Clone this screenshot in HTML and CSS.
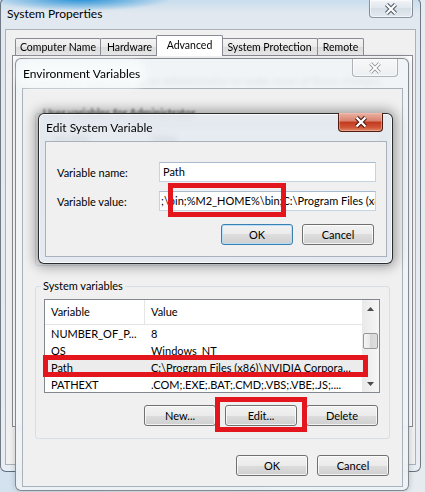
FILE: index.html
```html
<!DOCTYPE html>
<html lang="en">
<head>
    <meta charset="UTF-8">
    <meta name="viewport" content="width=device-width, initial-scale=1.0">
    <title>Environment Variables</title>
    <link rel="stylesheet" href="styles.css">
</head>
<body>
    <div class="desktop">

        <!-- System Properties, inactive, at the back -->
        <div class="window sysprop">
            <div class="titlebar">
                <span class="title">System Properties</span>
                <span class="close close-dim">
                    <svg width="14" height="12" viewBox="0 0 14 12"><path d="M2.5 1.5 L11.5 10.5 M11.5 1.5 L2.5 10.5" stroke="#56616d" stroke-width="4.4"/><path d="M2.5 1.5 L11.5 10.5 M11.5 1.5 L2.5 10.5" stroke="#fff" stroke-width="2.2"/></svg>
                </span>
            </div>
            <div class="client">
                <div class="tabs">
                    <span class="tab tab-cn">Computer Name</span>
                    <span class="tab tab-hw">Hardware</span>
                    <span class="tab tab-adv selected">Advanced</span>
                    <span class="tab tab-sp">System Protection</span>
                    <span class="tab tab-rm">Remote</span>
                </div>
                <div class="tabpage">
                    <p class="note">You must be logged on as an Administrator to make most of these changes.</p>
                </div>
            </div>
        </div>

        <!-- Environment Variables, inactive -->
        <div class="window envvars">
            <div class="titlebar">
                <span class="title glow">Environment Variables</span>
                <span class="close close-dim close-light">
                    <svg width="14" height="12" viewBox="0 0 14 12"><path d="M2.5 1.5 L11.5 10.5 M11.5 1.5 L2.5 10.5" stroke="#8d9196" stroke-width="3.6"/><path d="M2.5 1.5 L11.5 10.5 M11.5 1.5 L2.5 10.5" stroke="#fff" stroke-width="1.8"/></svg>
                </span>
            </div>
            <div class="client">
                <fieldset class="group group-user">
                    <legend>User variables for Administrator</legend>
                    <div class="listview">
                        <div class="lv-main">
                            <div class="lv-row lv-head"><span class="c1">Variable</span><span class="c2">Value</span></div>
                            <div class="lv-row"><span class="c1">TEMP</span><span class="c2">%USERPROFILE%\AppData\Local\Temp</span></div>
                            <div class="lv-row"><span class="c1">TMP</span><span class="c2">%USERPROFILE%\AppData\Local\Temp</span></div>
                        </div>
                    </div>
                    <div class="btn-row">
                        <button class="btn">New...</button>
                        <button class="btn">Edit...</button>
                        <button class="btn">Delete</button>
                    </div>
                </fieldset>

                <fieldset class="group group-sys">
                    <legend>System variables</legend>
                    <div class="listview">
                        <div class="lv-main">
                            <div class="lv-row lv-head"><span class="c1">Variable</span><span class="c2">Value</span></div>
                            <div class="lv-row"><span class="c1">NUMBER_OF_P...</span><span class="c2">8</span></div>
                            <div class="lv-row"><span class="c1">OS</span><span class="c2">Windows_NT</span></div>
                            <div class="lv-row picked"><span class="c1">Path</span><span class="c2">C:\Program Files (x86)\NVIDIA Corpora...</span></div>
                            <div class="lv-row"><span class="c1">PATHEXT</span><span class="c2">.COM;.EXE;.BAT;.CMD;.VBS;.VBE;.JS;....</span></div>
                        </div>
                        <div class="scrollbar">
                            <span class="sb-arrow"><svg width="7" height="4" viewBox="0 0 7 4"><path d="M0 4 L3.5 0 L7 4 Z" fill="#4a4a4a"/></svg></span>
                            <span class="sb-track"><span class="sb-thumb"></span></span>
                            <span class="sb-arrow"><svg width="7" height="4" viewBox="0 0 7 4"><path d="M0 0 L3.5 4 L7 0 Z" fill="#4a4a4a"/></svg></span>
                        </div>
                    </div>
                    <div class="btn-row">
                        <button class="btn">New...</button>
                        <button class="btn">Edit...</button>
                        <button class="btn">Delete</button>
                    </div>
                </fieldset>

                <div class="dlg-buttons">
                    <button class="btn">OK</button>
                    <button class="btn">Cancel</button>
                </div>
            </div>
        </div>

        <!-- Edit System Variable, the active dialog -->
        <div class="window editvar">
            <div class="titlebar">
                <span class="title">Edit System Variable</span>
                <span class="close close-red">
                    <svg width="14" height="12" viewBox="0 0 14 12"><path d="M2.5 1.5 L11.5 10.5 M11.5 1.5 L2.5 10.5" stroke="#4b1a10" stroke-width="4.4"/><path d="M2.5 1.5 L11.5 10.5 M11.5 1.5 L2.5 10.5" stroke="#fff" stroke-width="2.3"/></svg>
                </span>
            </div>
            <div class="client">
                <div class="field-grid">
                    <label class="field-label">Variable name:</label>
                    <div class="textbox">Path</div>
                    <label class="field-label">Variable value:</label>
                    <div class="textbox"><span class="scrolled">;\bin;%M2_HOME%\bin;C:\Program Files (x86)\NVIDIA Corporation\PhysX\Common</span></div>
                </div>
                <div class="dlg-buttons">
                    <button class="btn default">OK</button>
                    <button class="btn">Cancel</button>
                </div>
            </div>
        </div>

        <!-- red callout boxes drawn on top -->
        <div class="callout callout-value"></div>
        <div class="callout callout-path"></div>
        <div class="callout callout-edit"></div>
    </div>
</body>
</html>
```

FILE: styles.css
```css
* {
    box-sizing: border-box;
}

body {
    margin: 0;
    font-family: Lato, "Open Sans", sans-serif;
    font-size: 11px;
    color: #000;
}

.desktop {
    position: relative;
    width: 425px;
    height: 492px;
    overflow: hidden;
    background: linear-gradient(90deg, #d3e2ee, #e6ebf0);
}

/* ---- window frames ---- */

.window {
    position: absolute;
    display: flex;
    flex-direction: column;
    border-radius: 6px;
}

.titlebar {
    position: relative;
    display: flex;
    align-items: center;
    flex-shrink: 0;
}

.title {
    font-size: 12px;
    line-height: 16px;
    white-space: nowrap;
}

.client {
    background-color: #f0f0f0;
    border: 1px solid #a9b1ba;
    flex: 1;
}

.close {
    position: absolute;
    display: flex;
    align-items: center;
    justify-content: center;
    border: 1px solid rgba(60, 72, 86, 0.55);
    border-top: none;
    border-radius: 0 0 4px 4px;
}

.close-dim {
    background: linear-gradient(#f1f4f7, #dfe6ed 50%, #d6dee6 50%, #e3e9ef);
    box-shadow: inset 0 0 0 1px rgba(255, 255, 255, 0.6);
}

.close-light {
    background: linear-gradient(#f7f8fa, #eceff2);
    border-color: rgba(90, 98, 108, 0.45);
}

.close-red {
    background: linear-gradient(#eab2a3, #d9816d 45%, #c2391d 50%, #cf5538 80%, #e08a6a);
    border-color: #4f1c11;
    box-shadow: inset 0 0 0 1px rgba(255, 200, 180, 0.45);
}

.sysprop {
    left: 0;
    top: -2px;
    width: 421px;
    height: 474px;
    padding: 0 4px 6px 4px;
    border: 1px solid rgba(50, 60, 72, 0.65);
    background:
        radial-gradient(ellipse 90px 12px at 80px 0, rgba(28, 140, 214, 0.95), rgba(28, 140, 214, 0)),
        linear-gradient(180deg, #c6dcee 0, #e1e8ef 14px, #e7edf2 100%);
}

.sysprop .titlebar {
    height: 30px;
    padding-left: 2px;
}

.sysprop .close {
    right: 3px;
    top: 1px;
    width: 44px;
    height: 18px;
}

.envvars {
    left: 15px;
    top: 58px;
    width: 394px;
    height: 433px;
    padding: 0 5px 3px 6px;
    border: 1px solid rgba(60, 68, 78, 0.6);
    background-color: rgba(238, 242, 246, 0.88);
    backdrop-filter: blur(2.5px);
    box-shadow: 0 0 6px rgba(0, 0, 0, 0.18);
}

.envvars .titlebar {
    height: 29px;
    padding-left: 1px;
}

.glow {
    background-color: rgba(250, 252, 253, 0.8);
    border-radius: 8px;
    box-shadow: 0 0 6px 6px rgba(250, 252, 253, 0.8);
}

.envvars .close {
    right: 5px;
    top: 0;
    width: 46px;
    height: 18px;
}

.editvar {
    left: 38px;
    top: 113px;
    width: 355px;
    height: 151px;
    padding: 0 5px 6px 6px;
    border: 1px solid rgba(10, 10, 10, 0.85);
    background-color: rgba(226, 233, 240, 0.86);
    backdrop-filter: blur(3px);
    box-shadow: 0 0 12px 3px rgba(0, 0, 0, 0.35), inset 0 0 0 1px rgba(255, 255, 255, 0.7);
}

.editvar .titlebar {
    height: 27px;
    padding-left: 1px;
}

.editvar .close {
    right: 4px;
    top: -1px;
    width: 45px;
    height: 19px;
}

/* ---- tabs ---- */

.sysprop .client {
    padding: 5px 2px 0 6px;
}

.tabs {
    display: flex;
    align-items: flex-end;
    padding-left: 3px;
    height: 20px;
    position: relative;
    z-index: 1;
}

.tab {
    height: 17px;
    margin-right: -1px;
    border: 1px solid #898c95;
    border-bottom: none;
    border-radius: 2px 2px 0 0;
    background: linear-gradient(#f3f3f3, #ebebeb 50%, #dcdcdc 50%, #e5e5e5);
    font-size: 10.5px;
    line-height: 16px;
    text-align: center;
    white-space: nowrap;
}

.tab-cn { width: 86px; }
.tab-hw { width: 59px; }
.tab-sp { width: 97px; }
.tab-rm { width: 47px; }

.tab.selected {
    width: 67px;
    height: 21px;
    margin: 0 -2px -1px -2px;
    background: #fff;
    position: relative;
    line-height: 18px;
}

.tabpage {
    height: 372px;
    background-color: #fff;
    border: 1px solid #898c95;
    padding: 17px 10px;
}

.note {
    margin: 0;
    line-height: 16px;
    white-space: nowrap;
    color: #555;
}

/* ---- group boxes and list views ---- */

.envvars .client {
    padding: 16px 12px 0 12px;
}

.group {
    margin: 0;
    min-width: 0;
    padding: 5px 9px 12px 8px;
    border: 1px solid #d5dfe5;
    border-radius: 3px;
}

.group legend {
    margin-left: -3px;
    padding: 0 2px;
    line-height: 16px;
}

/* the edit dialog's glass edge smears this label */
.group-user legend {
    filter: blur(0.9px);
    color: #444;
}

.group-sys {
    margin-top: 12px;
}

.listview {
    display: flex;
    height: 94px;
    background-color: #fff;
    border: 1px solid #828790;
    overflow: hidden;
}

.lv-main {
    flex: 1;
}

.lv-row {
    display: flex;
    height: 17px;
    line-height: 17px;
    white-space: nowrap;
}

.lv-row .c1 {
    width: 100px;
    padding-left: 6px;
    flex-shrink: 0;
}

.lv-row .c2 {
    padding-left: 6px;
}

.lv-head {
    height: 25px;
    line-height: 24px;
    border-bottom: 1px solid #e5e5e5;
}

.lv-head .c1 {
    border-right: 1px solid #e5e5e5;
}

.lv-row.picked {
    background-color: #ececec;
}

.scrollbar {
    display: flex;
    flex-direction: column;
    width: 17px;
    background: linear-gradient(90deg, #e9e9e9, #f6f6f6);
}

.sb-arrow {
    display: flex;
    align-items: center;
    justify-content: center;
    height: 17px;
}

.sb-track {
    flex: 1;
    padding: 16px 1px 0;
}

.sb-thumb {
    display: block;
    height: 16px;
    border: 1px solid #979797;
    border-radius: 2px;
    background: linear-gradient(90deg, #f5f5f5, #e6e6e6 50%, #d6d6d6 50%, #dedede);
}

.btn-row {
    display: flex;
    justify-content: flex-end;
    gap: 9px;
    margin-top: 12px;
    padding-right: 2px;
}

.dlg-buttons {
    display: flex;
    justify-content: flex-end;
    gap: 9px;
    margin-top: 16px;
    padding-right: 1px;
}

.btn {
    width: 72px;
    height: 21px;
    padding: 0;
    border: 1px solid #707070;
    border-radius: 3px;
    background: linear-gradient(#f2f2f2, #ebebeb 50%, #dddddd 50%, #cfcfcf);
    box-shadow: inset 0 0 0 1px rgba(255, 255, 255, 0.75);
    font-family: inherit;
    font-size: 11px;
    color: #000;
}

.btn.default {
    border-color: #3c7fb1;
    box-shadow: inset 0 0 0 1px rgba(178, 222, 248, 0.9);
}

/* ---- edit dialog body ---- */

.editvar .client {
    padding: 20px 10px 11px 11px;
}

.field-grid {
    display: grid;
    grid-template-columns: 102px 217px;
    row-gap: 9px;
    align-items: center;
}

.textbox {
    height: 20px;
    padding-left: 3px;
    line-height: 18px;
    background-color: #fff;
    border: 1px solid #c6d3e0;
    border-top-color: #a9bccf;
    overflow: hidden;
    white-space: nowrap;
}

.scrolled {
    margin-left: -2px;
}

.editvar .dlg-buttons {
    margin-top: 13px;
    padding-right: 2px;
}

/* ---- red callout boxes ---- */

.callout {
    position: absolute;
    border: 5px solid #e3161d;
}

.callout-value {
    left: 168px;
    top: 183px;
    width: 118px;
    height: 34px;
}

.callout-path {
    left: 43px;
    top: 355px;
    width: 325px;
    height: 22px;
}

.callout-edit {
    left: 215px;
    top: 397px;
    width: 92px;
    height: 35px;
}
```
